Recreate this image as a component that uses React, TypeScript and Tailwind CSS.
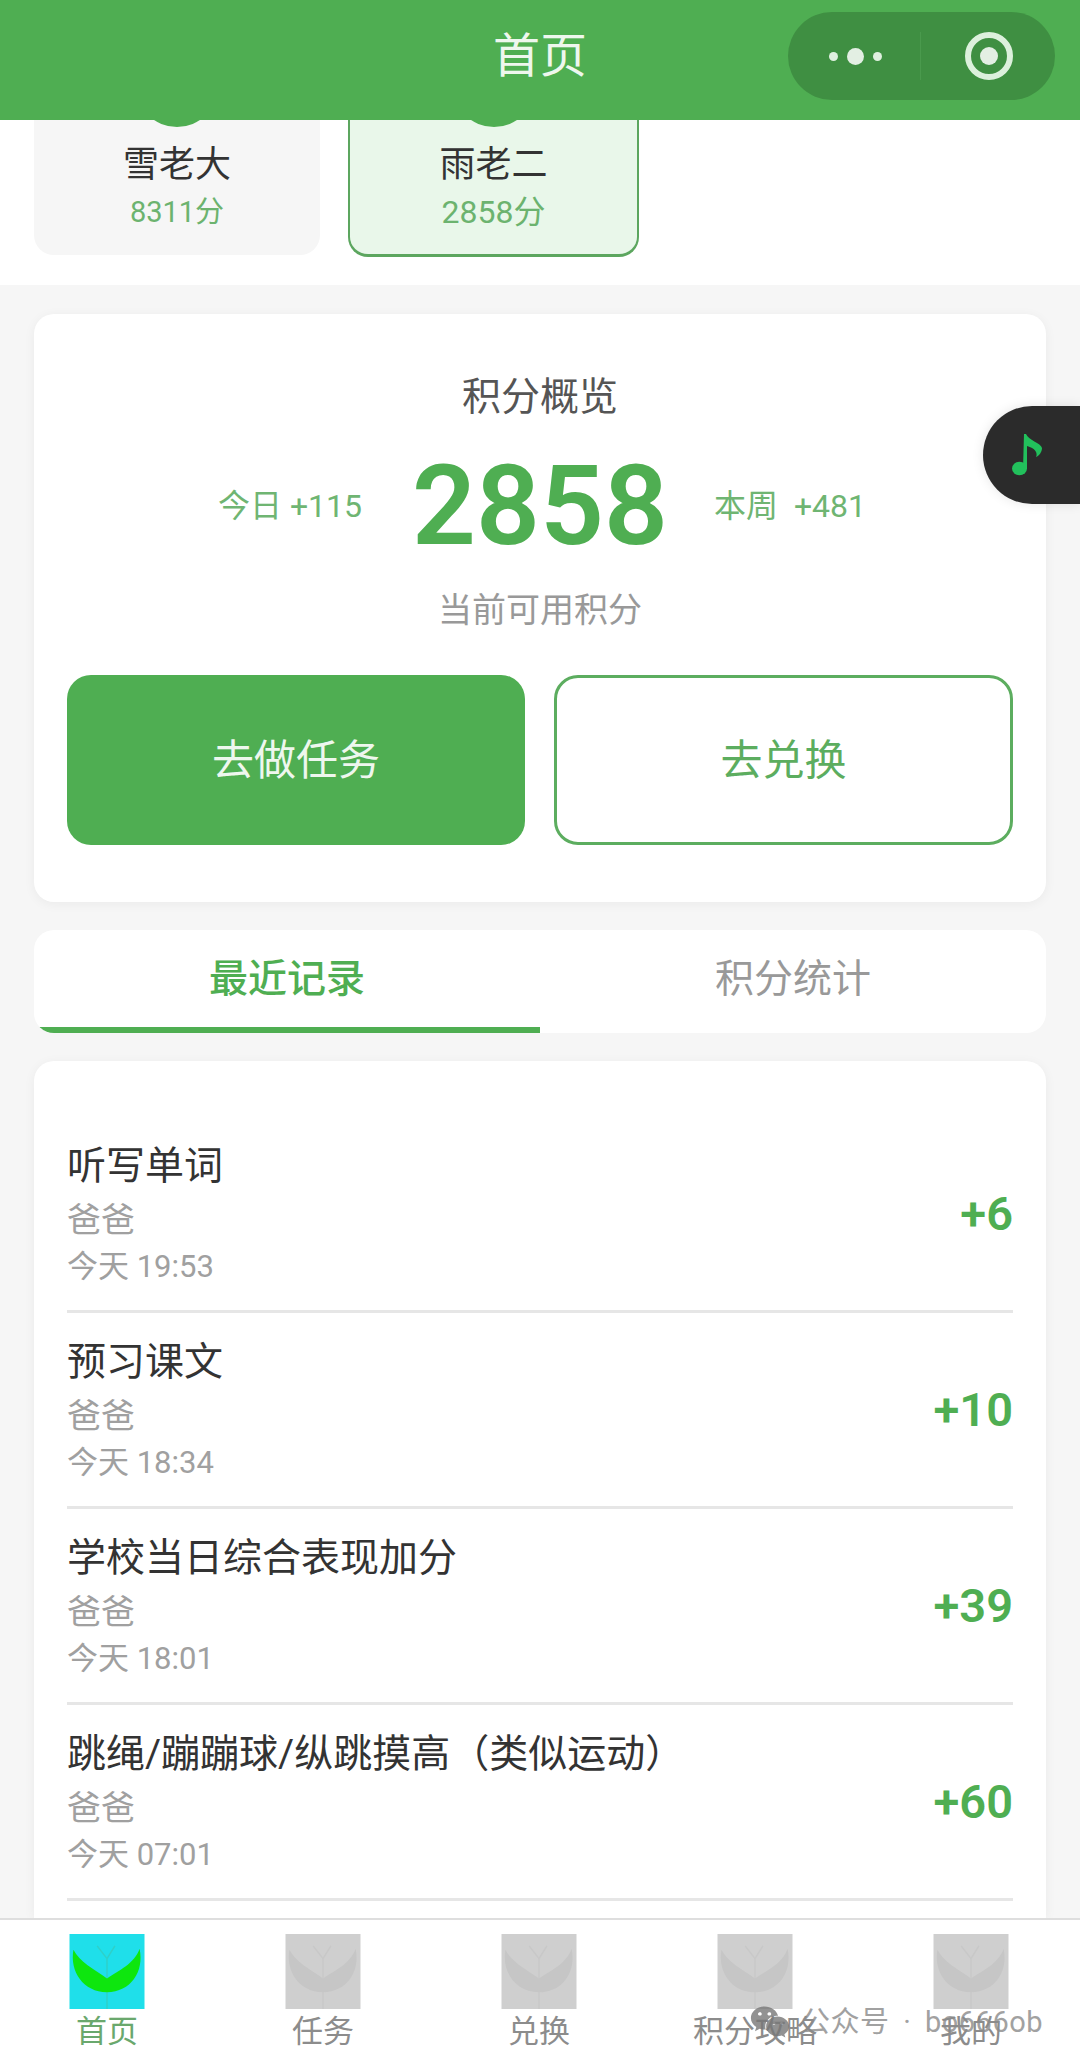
import React from 'react';
import { FaWeixin } from 'react-icons/fa';

const FONT = 'font-["Roboto","Noto_Sans_CJK_SC",sans-serif]';

const records = [
  { title: '听写单词', by: '爸爸', time: '今天 19:53', points: '+6' },
  { title: '预习课文', by: '爸爸', time: '今天 18:34', points: '+10' },
  { title: '学校当日综合表现加分', by: '爸爸', time: '今天 18:01', points: '+39' },
  { title: '跳绳/蹦蹦球/纵跳摸高（类似运动）', by: '爸爸', time: '今天 07:01', points: '+60' },
];

const tabs = ['首页', '任务', '兑换', '积分攻略', '我的'];

const LeafIcon: React.FC<{ active: boolean }> = ({ active }) => (
  <svg viewBox="0 0 76 76" className="block h-[75px] w-[76px]">
    <rect width="76" height="76" fill={active ? '#1fdfea' : '#cfcfcf'} />
    <path
      d="M38 25V76M38 25L28 12M38 25L46 12"
      fill="none"
      stroke={active ? '#2fd0c8' : '#c8c8c8'}
      strokeWidth="1.5"
    />
    <path
      d="M4 16C10 28 25 36 38 45C50 37 66 30 71 15C76 38 62 59 38 59C14 59 0 38 4 16Z"
      fill={active ? '#0ee60e' : '#c6c6c6'}
    />
  </svg>
);

const AvatarTip: React.FC = () => (
  <div className="h-[7px] w-[46px] overflow-hidden">
    <div className="-ml-[18px] -mt-[75px] h-[82px] w-[82px] rounded-full bg-[#4fae52]" />
  </div>
);

const App: React.FC = () => {
  return (
    <div className={`relative flex h-[2064px] w-[1080px] flex-col overflow-hidden bg-[#f6f6f6] ${FONT}`}>
      {/* Nav bar */}
      <div className="relative flex h-[120px] shrink-0 items-center justify-center bg-[#4fae52] pb-[9px]">
        <span className="text-[47px] leading-none text-[#eef7ee]">首页</span>
        <div className="absolute left-[788px] top-[12px] flex h-[88px] w-[267px] items-center rounded-full bg-[#3f8f42]">
          <div className="flex h-full w-[132px] items-center justify-center gap-[9px] pl-[3px]">
            <span className="h-[9px] w-[9px] rounded-full bg-[#dff0df]" />
            <span className="h-[17px] w-[17px] rounded-full bg-[#e3efe3]" />
            <span className="h-[9px] w-[9px] rounded-full bg-[#dff0df]" />
          </div>
          <div className="h-[48px] w-px bg-[#4a9a4d]" />
          <div className="flex flex-1 items-center justify-center pl-[2px]">
            <div className="flex h-[48px] w-[48px] items-center justify-center rounded-full border-[6px] border-[#dcf0dc]">
              <span className="h-[18px] w-[18px] rounded-full bg-[#e3efe3]" />
            </div>
          </div>
        </div>
      </div>

      {/* Child selector */}
      <div className="flex h-[165px] shrink-0 gap-[28px] bg-white px-[34px]">
        <div className="flex h-[135px] w-[286px] flex-col items-center rounded-b-[20px] bg-[#f6f6f6]">
          <AvatarTip />
          <div className="mt-[16px] text-[36px] leading-[44px] text-[#333]">雪老大</div>
          <div className="mt-[5px] text-[29px] leading-[40px] text-[#6cb36f]">8311分</div>
        </div>
        <div className="flex h-[137px] w-[291px] flex-col items-center rounded-b-[20px] border-x-2 border-b-[3px] border-[#5ca65f] bg-[#e9f7ea]">
          <AvatarTip />
          <div className="mt-[16px] text-[36px] leading-[44px] text-[#333]">雨老二</div>
          <div className="mt-[5px] text-[32px] leading-[40px] text-[#6cb36f]">2858分</div>
        </div>
      </div>

      <div className="flex flex-1 flex-col gap-[28px] overflow-hidden px-[34px] pt-[29px]">
        {/* Points overview */}
        <div className="h-[588px] shrink-0 rounded-[20px] bg-white px-[33px] pt-[60px] shadow-[0_2px_12px_rgba(0,0,0,0.05)]">
          <div className="text-center text-[39px] leading-[46px] text-[#555]">积分概览</div>
          <div className="mt-[35px] flex h-[102px] items-center justify-center gap-[50px] pl-[4px]">
            <span className="text-[32px] leading-none text-[#6fb572]">今日 +115</span>
            <span className="text-[112px] font-semibold leading-none text-[#4fae52]">2858</span>
            <span className="-ml-[4px] text-[32px] leading-none text-[#6fb572] [word-spacing:8px]">本周 +481</span>
          </div>
          <div className="mt-[31px] text-center text-[34px] leading-[44px] text-[#999]">当前可用积分</div>
          <div className="mt-[43px] flex gap-[29px]">
            <button className="flex h-[170px] w-[458px] items-center justify-center rounded-[24px] bg-[#4fae52] text-[42px] text-[#eef7ee]">
              去做任务
            </button>
            <button className="flex h-[170px] w-[459px] items-center justify-center rounded-[24px] border-[3px] border-[#5cad5f] bg-white text-[42px] text-[#5cad5f]">
              去兑换
            </button>
          </div>
        </div>

        {/* Tabs */}
        <div className="flex h-[103px] shrink-0 overflow-hidden rounded-[20px] bg-white">
          <div className="flex w-1/2 items-center justify-center border-b-[6px] border-[#4fae52] pt-[2px] text-[39px] font-medium text-[#4fae52]">
            最近记录
          </div>
          <div className="flex w-1/2 items-center justify-center pb-[4px] text-[39px] text-[#999]">
            积分统计
          </div>
        </div>

        {/* Records */}
        <div className="flex-1 rounded-t-[20px] bg-white px-[33px] pt-[56px] shadow-[0_2px_12px_rgba(0,0,0,0.05)]">
          {records.map(r => (
            <div key={r.time} className="flex h-[196px] items-center justify-between border-b-[3px] border-[#e6e6e6] pt-[2px]">
              <div>
                <div className="text-[39px] leading-[52px] text-[#333]">{r.title}</div>
                <div className="mt-[3px] text-[34px] leading-[50px] text-[#a0a0a0]">{r.by}</div>
                <div className="text-[31px] leading-[44px] text-[#a0a0a0]">{r.time}</div>
              </div>
              <span className="text-[47px] font-semibold text-[#4fae52]">{r.points}</span>
            </div>
          ))}
        </div>
      </div>

      {/* Bottom tab bar */}
      <div className="grid h-[146px] shrink-0 grid-cols-5 border-t-2 border-[#dedede] bg-white pt-[14px]">
        {tabs.map((t, i) => (
          <div key={t} className="flex flex-col items-center pr-[2px]">
            <LeafIcon active={i === 0} />
            <span className={`mt-[2px] text-[31px] leading-[42px] ${i === 0 ? 'text-[#6aa86d]' : 'text-[#8c8c8c]'}`}>{t}</span>
          </div>
        ))}
      </div>

      {/* Floating music button */}
      <div className="absolute left-[983px] top-[406px] flex h-[98px] w-[97px] items-center rounded-l-[49px] bg-[#2b2b2b] pl-[29px] shadow-[0_0_12px_rgba(0,0,0,0.1)]">
        <svg viewBox="0 0 30 42" className="h-[42px] w-[30px]">
          <ellipse cx="7.5" cy="34.5" rx="7.5" ry="6.8" fill="#22c05c" />
          <path d="M11 35L12 0L14 0C16 6 29 9 30 14C30 18 27 22 24 23C26 19 23 14 15 12L15 35Z" fill="#22c05c" />
        </svg>
      </div>

      {/* Watermark */}
      <div className="pointer-events-none absolute left-[750px] top-[2003px] flex items-center gap-[11px] text-[#8a8a8a] opacity-80">
        <FaWeixin className="h-[36px] w-[40px] text-[#777]" />
        <span className="text-[29px] leading-[38px] tracking-[0.5px] [word-spacing:6px]">公众号 · bo666ob</span>
      </div>
    </div>
  );
};

export default App;
